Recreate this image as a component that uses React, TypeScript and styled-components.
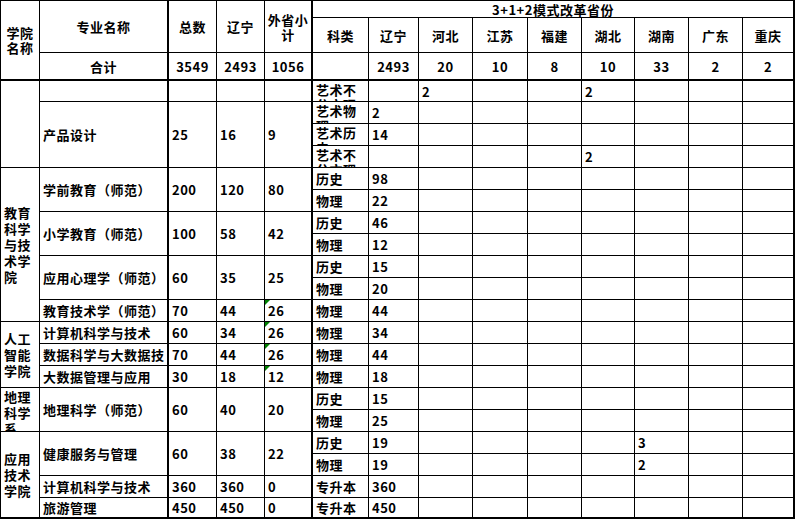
import styled, { createGlobalStyle } from "styled-components";

const GlobalStyle = createGlobalStyle`
  body {
    margin: 0;
    background: #fff;
  }
`;

const Sheet = styled.div`
  display: grid;
  grid-template-columns: 39px 129px 48px 48px 48px 56px 50px 54px 55px 54px 53px 54px 54px 52px;
  grid-template-rows: 17px 35px 28px 21px repeat(18, 22px) 21px;
  width: max-content;
  border-top: 1px solid #000;
  border-left: 1px solid #000;
  font-family: "Noto Sans CJK SC", sans-serif;
  font-weight: 700;
  font-size: 13px;
  letter-spacing: 0.5px;
  color: #000;
  background: #fff;
`;

type CellProps = {
  $rs?: number;
  $cs?: number;
  $center?: boolean;
  $thickR?: boolean;
  $thickB?: boolean;
  $wrap?: boolean;
  $top?: boolean;
  $flag?: boolean;
};

const Cell = styled.div<CellProps>`
  grid-row: span ${(p) => p.$rs ?? 1};
  grid-column: span ${(p) => p.$cs ?? 1};
  position: relative;
  display: flex;
  align-items: ${(p) => (p.$top ? "flex-start" : "center")};
  justify-content: ${(p) => (p.$center ? "center" : "flex-start")};
  text-align: ${(p) => (p.$center ? "center" : "left")};
  padding: ${(p) => (p.$top ? "1px 3px 0" : "0 3px")};
  border-right: ${(p) => (p.$thickR ? 2 : 1)}px solid #000;
  border-bottom: ${(p) => (p.$thickB ? 2 : 1)}px solid #000;
  overflow: hidden;
  white-space: ${(p) => (p.$wrap ? "normal" : "nowrap")};
  line-height: 15px;
  min-width: 0;

  &::before {
    content: "";
    display: ${(p) => (p.$flag ? "block" : "none")};
    position: absolute;
    top: 0;
    left: 0;
    border-top: 5px solid #008000;
    border-right: 5px solid transparent;
  }
`;

const Head = styled(Cell)`
  padding: 0 1px;
`;

const College = styled(Cell)`
  line-height: 16px;
  white-space: normal;
`;

const provinces = ["科类", "辽宁", "河北", "江苏", "福建", "湖北", "湖南", "广东", "重庆"];
const totals = ["", "2493", "20", "10", "8", "10", "33", "2", "2"];

// 辽宁 + 7 other provinces for one data row
const Counts = ({ v = [], last }: { v?: string[]; last?: boolean }) => (
  <>
    {Array.from({ length: 8 }, (_, i) => (
      <Cell key={i} $thickR={i === 7} $thickB={last}>
        {v[i] ?? ""}
      </Cell>
    ))}
  </>
);

const App = () => {
  return (
    <>
      <GlobalStyle />
      <Sheet>
        {/* header */}
        <Head $rs={3} $center $wrap $thickB>
          学院名称
        </Head>
        <Head $rs={2} $center $thickR>
          专业名称
        </Head>
        <Head $rs={2} $center>
          总数
        </Head>
        <Head $rs={2} $center>
          辽宁
        </Head>
        <Head $rs={2} $center $wrap $thickR>
          外省小计
        </Head>
        <Head $cs={9} $center $thickR>
          3+1+2模式改革省份
        </Head>
        {provinces.map((p, i) => (
          <Head key={p} $center $thickR={i === 8}>
            {p}
          </Head>
        ))}

        <Head $center $thickR $thickB>
          合计
        </Head>
        <Head $center $thickB>
          3549
        </Head>
        <Head $center $thickB>
          2493
        </Head>
        <Head $center $thickR $thickB>
          1056
        </Head>
        {totals.map((t, i) => (
          <Head key={i} $center $thickB $thickR={i === 8}>
            {t}
          </Head>
        ))}

        {/* 艺术 */}
        <College $rs={4} />
        <Cell $thickR />
        <Cell />
        <Cell />
        <Cell $thickR />
        <Cell $wrap $top>
          艺术不分文理
        </Cell>
        <Counts v={["", "2", "", "", "2"]} />

        <Cell $rs={3} $thickR>
          产品设计
        </Cell>
        <Cell $rs={3}>25</Cell>
        <Cell $rs={3}>16</Cell>
        <Cell $rs={3} $thickR>
          9
        </Cell>
        <Cell $wrap $top>
          艺术物理
        </Cell>
        <Counts v={["2"]} />

        <Cell $wrap $top>
          艺术历史
        </Cell>
        <Counts v={["14"]} />

        <Cell $wrap $top>
          艺术不分文理
        </Cell>
        <Counts v={["", "", "", "", "2"]} />

        {/* 教育科学与技术学院 */}
        <College $rs={7}>教育科学与技术学院</College>
        <Cell $rs={2} $thickR>
          学前教育（师范）
        </Cell>
        <Cell $rs={2}>200</Cell>
        <Cell $rs={2}>120</Cell>
        <Cell $rs={2} $thickR>
          80
        </Cell>
        <Cell>历史</Cell>
        <Counts v={["98"]} />
        <Cell>物理</Cell>
        <Counts v={["22"]} />

        <Cell $rs={2} $thickR>
          小学教育（师范）
        </Cell>
        <Cell $rs={2}>100</Cell>
        <Cell $rs={2}>58</Cell>
        <Cell $rs={2} $thickR>
          42
        </Cell>
        <Cell>历史</Cell>
        <Counts v={["46"]} />
        <Cell>物理</Cell>
        <Counts v={["12"]} />

        <Cell $rs={2} $thickR>
          应用心理学（师范）
        </Cell>
        <Cell $rs={2}>60</Cell>
        <Cell $rs={2}>35</Cell>
        <Cell $rs={2} $thickR>
          25
        </Cell>
        <Cell>历史</Cell>
        <Counts v={["15"]} />
        <Cell>物理</Cell>
        <Counts v={["20"]} />

        <Cell $thickR>教育技术学（师范）</Cell>
        <Cell>70</Cell>
        <Cell>44</Cell>
        <Cell $thickR $flag>
          26
        </Cell>
        <Cell>物理</Cell>
        <Counts v={["44"]} />

        {/* 人工智能学院 */}
        <College $rs={3}>人工智能学院</College>
        <Cell $thickR>计算机科学与技术</Cell>
        <Cell>60</Cell>
        <Cell>34</Cell>
        <Cell $thickR $flag>
          26
        </Cell>
        <Cell>物理</Cell>
        <Counts v={["34"]} />

        <Cell $thickR>数据科学与大数据技</Cell>
        <Cell>70</Cell>
        <Cell>44</Cell>
        <Cell $thickR $flag>
          26
        </Cell>
        <Cell>物理</Cell>
        <Counts v={["44"]} />

        <Cell $thickR>大数据管理与应用</Cell>
        <Cell>30</Cell>
        <Cell>18</Cell>
        <Cell $thickR $flag>
          12
        </Cell>
        <Cell>物理</Cell>
        <Counts v={["18"]} />

        {/* 地理科学系 */}
        <College $rs={2} $top>
          地理科学系
        </College>
        <Cell $rs={2} $thickR>
          地理科学（师范）
        </Cell>
        <Cell $rs={2}>60</Cell>
        <Cell $rs={2}>40</Cell>
        <Cell $rs={2} $thickR>
          20
        </Cell>
        <Cell>历史</Cell>
        <Counts v={["15"]} />
        <Cell>物理</Cell>
        <Counts v={["25"]} />

        {/* 应用技术学院 */}
        <College $rs={4} $thickB>
          应用技术学院
        </College>
        <Cell $rs={2} $thickR>
          健康服务与管理
        </Cell>
        <Cell $rs={2}>60</Cell>
        <Cell $rs={2}>38</Cell>
        <Cell $rs={2} $thickR>
          22
        </Cell>
        <Cell>历史</Cell>
        <Counts v={["19", "", "", "", "", "3"]} />
        <Cell>物理</Cell>
        <Counts v={["19", "", "", "", "", "2"]} />

        <Cell $thickR>计算机科学与技术</Cell>
        <Cell>360</Cell>
        <Cell>360</Cell>
        <Cell $thickR>0</Cell>
        <Cell>专升本</Cell>
        <Counts v={["360"]} />

        <Cell $thickR $thickB>
          旅游管理
        </Cell>
        <Cell $thickB>450</Cell>
        <Cell $thickB>450</Cell>
        <Cell $thickR $thickB>
          0
        </Cell>
        <Cell $thickB>专升本</Cell>
        <Counts v={["450"]} last />
      </Sheet>
    </>
  );
};

export default App;
